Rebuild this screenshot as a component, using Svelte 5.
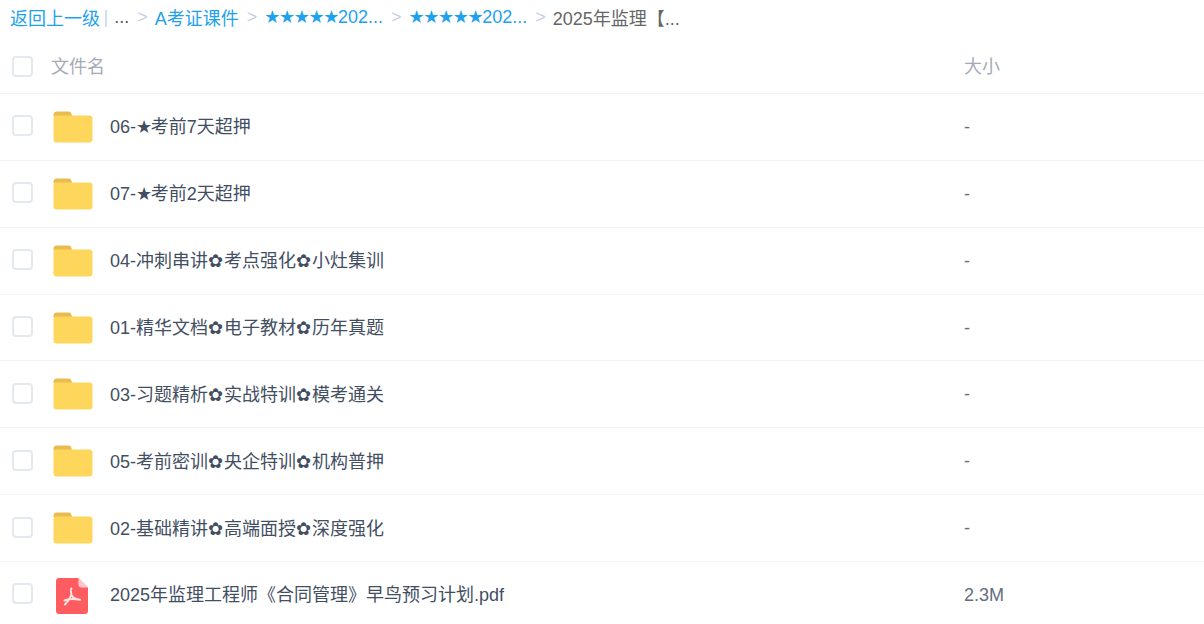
<script lang="ts">
  type Row = { name: string; size: string; kind: "folder" | "pdf" };

  const rows: Row[] = [
    { name: "06-★考前7天超押", size: "-", kind: "folder" },
    { name: "07-★考前2天超押", size: "-", kind: "folder" },
    { name: "04-冲刺串讲✿考点强化✿小灶集训", size: "-", kind: "folder" },
    { name: "01-精华文档✿电子教材✿历年真题", size: "-", kind: "folder" },
    { name: "03-习题精析✿实战特训✿模考通关", size: "-", kind: "folder" },
    { name: "05-考前密训✿央企特训✿机构普押", size: "-", kind: "folder" },
    { name: "02-基础精讲✿高端面授✿深度强化", size: "-", kind: "folder" },
    { name: "2025年监理工程师《合同管理》早鸟预习计划.pdf", size: "2.3M", kind: "pdf" }
  ];

  // fallback symbols have other widths than the source font, so they get their own span
  const parts = (name: string) => name.split(/(★+|✿)/);
</script>

<div class="page">
  <nav class="crumbs">
    <a href="#back">返回上一级</a>
    <span class="bar">|</span>
    <span class="dots">...</span>
    <span class="sep">&gt;</span>
    <a href="#a">A考证课件</a>
    <span class="sep">&gt;</span>
    <a href="#b"><span class="star">★★★★★</span>202...</a>
    <span class="sep">&gt;</span>
    <a href="#c"><span class="star">★★★★★</span>202...</a>
    <span class="sep">&gt;</span>
    <span class="current">2025年监理【...</span>
  </nav>

  <div class="row head">
    <span class="check"></span>
    <span class="title">文件名</span>
    <span class="size">大小</span>
  </div>

  {#each rows as row, i (i)}
    <div class="row item">
      <span class="check"></span>
      <span class="icon">
        {#if row.kind === "folder"}
          <svg width="40" height="32" viewBox="0 0 40 32">
            <path d="M.5 4C.5 1.600 1.800.500 4 .500h11.500c2 0 3 1.200 3.500 4.500H.5z" fill="#e9bc50" />
            <path d="M.5 6.500C.5 5.300 1.300 4.500 3 4.500h33.500c1.700 0 3 .8 3 3v21c0 1.900-1.100 3-3 3H3.500c-1.900 0-3-1.100-3-3z" fill="#ffd65c" />
          </svg>
        {:else}
          <svg class="pdf" width="32" height="36" viewBox="0 0 32 36">
            <path d="M3 0h19.500L32 9.500V33c0 1.800-1.200 3-3 3H3c-1.800 0-3-1.200-3-3V3C0 1.200 1.200 0 3 0z" fill="#ff5c62" />
            <path d="M22.500 0L32 9.500h-6.500c-1.900 0-3-1.100-3-3z" fill="#ffc9cb" />
            <path d="M15.500 10.500c-.9.300-.5 4.200-.1 6.500c-1.300 3.300-3.600 6.700-6.400 9.500M15.400 17c1.400 2.400 3.600 4.300 8.600 4.800M8.500 22.500c3.500-1.700 9.500-1.800 15.500-.7" fill="none" stroke="#ffe4e4" stroke-width="2" stroke-linecap="round" stroke-linejoin="round" />
          </svg>
        {/if}
      </span>
      <span class="name">
        {#each parts(row.name) as part, j (j)}
          {#if part.startsWith("★")}<span class="star">{part}</span>{:else if part === "✿"}<span class="flower">{part}</span>{:else}{part}{/if}
        {/each}
      </span>
      <span class="size">{row.size}</span>
    </div>
  {/each}
</div>

<style>
  :global(body) {
    margin: 0;
    background: #fff;
  }
  .page {
    width: 1204px;
    height: 624px;
    overflow: hidden;
    font-family: "Liberation Sans", "DejaVu Sans", "Noto Sans CJK SC", sans-serif;
    font-size: 18px;
  }
  .crumbs {
    height: 34px;
    padding-bottom: 4px;
    display: flex;
    align-items: center;
    padding-left: 10px;
    color: #666;
    white-space: nowrap;
  }
  .crumbs a {
    color: #1ea2ec;
    text-decoration: none;
  }
  .star {
    letter-spacing: -1.4px;
  }
  .flower {
    letter-spacing: 0.9px;
  }
  .bar {
    color: #c6d6e8;
    margin: 0 6px 0 3.5px;
  }
  .dots {
    color: #555;
  }
  .sep {
    color: #c3d1e2;
    margin: 0 7px 0 8px;
  }
  .current {
    color: #666;
  }
  .row {
    display: flex;
    align-items: center;
    box-sizing: border-box;
    border-bottom: 1px solid #f1f3f6;
  }
  .head {
    height: 56px;
  }
  .item {
    height: 66.86px;
  }
  .check {
    box-sizing: border-box;
    width: 21px;
    height: 21px;
    margin: 0 0 2px 12px;
    border: 2px solid #e4e8ef;
    border-radius: 4px;
    flex: none;
  }
  .head .check {
    margin: 2px 0 0 12px;
  }
  .title {
    margin-left: 18px;
    padding-bottom: 2px;
    color: #a5abb6;
    flex: 1;
  }
  .icon {
    width: 40px;
    margin-left: 20px;
    display: flex;
    justify-content: center;
    flex: none;
  }
  .pdf {
    margin-top: 2px;
    margin-right: 2px;
  }
  .name {
    margin-left: 17px;
    padding-bottom: 3px;
    color: #424e62;
    flex: 1;
  }
  .size {
    width: 240px;
    padding-top: 1px;
    flex: none;
    color: #656e7d;
  }
  .head .size {
    padding: 0 0 2px;
    color: #a5abb6;
  }
</style>
